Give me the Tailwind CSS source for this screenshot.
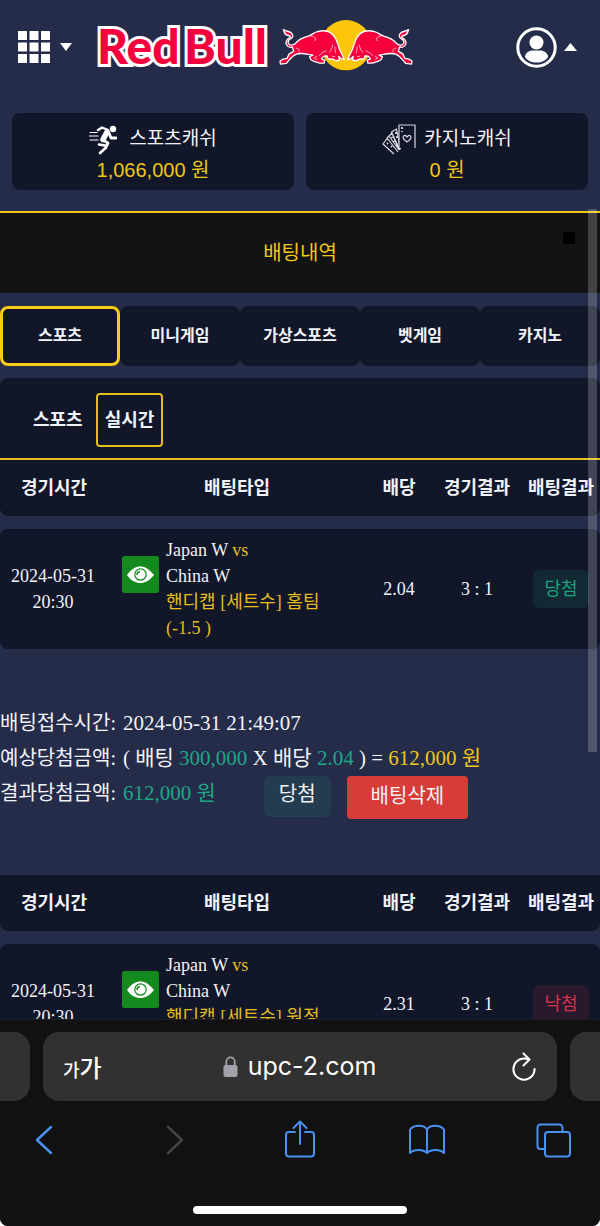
<!DOCTYPE html>
<html lang="ko">
<head>
    <meta charset="UTF-8">
    <meta name="viewport" content="width=device-width, initial-scale=1.0">
    <title>배팅내역</title>
    <script src="https://cdn.jsdelivr.net/npm/@tailwindcss/browser@4"></script>
</head>

<body class="bg-white">
    <div class="h-screen flex flex-col overflow-hidden rounded-b-lg bg-[#252c49] text-[#f1f3f8] font-['Liberation_Sans','Noto_Sans_CJK_KR',sans-serif]">

      <!-- top bar -->
      <header class="h-[94px] shrink-0 flex items-center pl-[18px] pr-[23px]">
        <button type="button" aria-label="메뉴" class="flex items-center gap-[10px]">
          <svg width="32" height="32" viewBox="0 0 32 32" fill="#fff">
            <path d="M0 0h9v9H0zM11.500 0h9v9h-9zM23 0h9v9h-9zM0 11.500h9v9H0zM11.500 11.500h9v9h-9zM23 11.500h9v9h-9zM0 23h9v9H0zM11.500 23h9v9h-9zM23 23h9v9h-9z"/>
          </svg>
          <svg width="12" height="8" viewBox="0 0 12 8" fill="#fff"><path d="M0 0h12L6 8z"/></svg>
        </button>
        <a href="#" class="ml-[21px] mb-1 flex items-center gap-[8px]">
          <svg width="178" height="64" viewBox="0 0 178 64" font-family="Lato, sans-serif" font-weight="900" font-size="48" fill="#f5003c" stroke="#fff" stroke-width="6" stroke-linejoin="miter" paint-order="stroke">
            <text x="4" y="51">Red</text>
            <text x="91" y="51">Bull</text>
          </svg>
          <svg width="134" height="53" viewBox="24 54 404 160">
            <circle cx="226" cy="133" r="76" fill="#fdc60b"/>
            <g id="bull" stroke="#fff" stroke-width="4" stroke-linejoin="round" stroke-linecap="round">
              <path fill="#f5003c" d="M37 86C44 92 54 90 61 96C68 103 66 109 60 113C52 117 50 121 52 127C56 135 66 134 74 127C84 116 96 110 112 106C122 103 128 95 140 92C154 88 168 88 180 96C193 105 198 118 202 132C206 146 210 154 215 163L221 177C213 176 208 172 204 167L206 178L196 180L186 175L172 174L168 165L158 167L152 175L162 178L160 187L146 187L130 182L120 177L116 168L126 163L112 161C96 157 86 157 76 160L66 166L56 176L46 188L28 190L27 181L36 175L48 173L54 160L68 151L64 138C58 141 50 138 46 131C43 122 48 115 56 110C60 106 56 103 49 103C40 101 40 95 37 86Z"/>
              <path d="M186 132c-1 10-6 16-10 22m16-16c0 8 3 12 3 18M122 106c10 0 14 6 10 14M76 142c8 2 10 6 8 12" fill="none" stroke-width="2"/>
              <path d="M166 150c-8 4-16 6-20 14M138 166l-8 6 8 4M184 166l8 2" fill="none" stroke-width="2"/>
            </g>
            <use href="#bull" transform="translate(452 0) scale(-1 1)"/>
          </svg>
        </a>
        <button type="button" aria-label="내 정보" class="ml-auto flex items-center gap-[7px]">
          <svg width="41" height="41" viewBox="0 0 41 41" fill="#fff">
            <circle cx="20.500" cy="20.500" r="18.700" fill="none" stroke="#fff" stroke-width="3"/>
            <circle cx="20.500" cy="15.500" r="7"/>
            <path d="M9 30c0-4 4-6.500 8-6.500h7c4 0 8 2.500 8 6.500-2 3.500-6 5.500-11.500 5.500S11 33.500 9 30z"/>
          </svg>
          <svg width="13" height="8" viewBox="0 0 13 8" fill="#fff"><path d="M0 8h13L6.500 0z"/></svg>
        </button>
      </header>

      <!-- balances -->
      <section class="shrink-0 grid grid-cols-2 gap-3 px-3 pt-[19px] pb-[21px]">
        <div class="h-[77px] pt-[11px] rounded-lg bg-[#111629] text-center">
          <div class="h-[31px] flex items-center justify-center gap-3 text-[19px]">
            <svg width="28" height="30" viewBox="0 0 28 30" fill="none" stroke="#fff" stroke-linecap="round" stroke-linejoin="round">
              <path d="M1 7.500h7M0 11h9M1 15h8" stroke-width="1.200"/>
              <circle cx="24" cy="4" r="3.200" fill="#fff" stroke="none"/>
              <path d="M9 5l4-2.500 6 2.500" stroke-width="2.400"/>
              <path d="M18 7l-4 7.500" stroke-width="5.500"/>
              <path d="M20 8l2 5h5M14 15l5 3-2.500 5" stroke-width="2.800"/>
              <path d="M10 19.500l6 1M16 23.500l-5 4.500" stroke-width="2.600"/>
            </svg>
            스포츠캐쉬
          </div>
          <div class="text-xl leading-[31px] text-[#f0c619]">1,066,000 원</div>
        </div>
        <div class="h-[77px] pt-[11px] rounded-lg bg-[#111629] text-center">
          <div class="h-[31px] flex items-center justify-center gap-2 text-[19px]">
            <svg width="34" height="31" viewBox="0 0 34 31" fill="#111629" stroke="#d5d8e0" stroke-width="1.200" stroke-linejoin="round">
              <path d="M12 30L1 20l6-8 10 14M16 28L5 14l5-5 8 17M17 26L9.500 8l5-3 4 20"/>
              <path d="M17 24V1h16v23"/>
              <path d="M25 18c-6-4-4-7-1.500-6.500L25 13l1.500-1.500C29 11 31 14 25 18z"/>
              <path d="M20 3v2m0 2v1M14 8v2m1 2v2M9.500 13l1 1m1 3l1 1M5 19l1 1m3 2l1 1" stroke-width="1.800"/>
            </svg>
            카지노캐쉬
          </div>
          <div class="text-xl leading-[31px] text-[#f0c619]">0 원</div>
        </div>
      </section>

      <main class="relative flex-1 min-h-0">
        <div class="h-full overflow-hidden">
          <div class="relative h-[82px] border-t-2 border-[#f0c619] bg-[#121315] flex items-center justify-center">
            <h1 class="text-xl text-[#f0c619]">배팅내역</h1>
            <button type="button" aria-label="닫기" class="absolute right-[25px] top-[19px] size-3 bg-black"></button>
          </div>

          <nav class="mt-[13px] grid grid-cols-5 h-[60px] text-base font-bold">
            <button type="button" class="rounded-lg bg-[#111629] border-3 border-[#f9cd16]">스포츠</button>
            <button type="button" class="rounded-lg bg-[#111629]">미니게임</button>
            <button type="button" class="rounded-lg bg-[#111629]">가상스포츠</button>
            <button type="button" class="rounded-lg bg-[#111629]">벳게임</button>
            <button type="button" class="rounded-lg bg-[#111629]">카지노</button>
          </nav>

          <div class="mt-3 h-[82px] pl-6 pt-[15px] flex items-start gap-1 rounded-t-lg bg-[#111629] border-b-2 border-[#e5bd1c] text-lg font-bold">
            <button type="button" class="h-[54px] px-[7px] rounded border-2 border-transparent">스포츠</button>
            <button type="button" class="h-[54px] px-[7px] rounded border-2 border-[#e5bd1c]">실시간</button>
          </div>

          <table class="w-full table-fixed border-separate border-spacing-0 text-lg leading-[26px] font-['Liberation_Serif','Noto_Sans_CJK_KR',serif]">
            <thead>
              <tr class="h-14">
                <th class="w-[18%] p-0 rounded-bl-lg bg-[#111629]">경기시간</th>
                <th class="w-[43%] p-0 bg-[#111629]">배팅타입</th>
                <th class="w-[11%] p-0 bg-[#111629]">배당</th>
                <th class="w-[15%] p-0 bg-[#111629]">경기결과</th>
                <th class="w-[13%] p-0 rounded-br-lg bg-[#111629]">배팅결과</th>
              </tr>
            </thead>
            <tbody class="before:block before:h-[13px] before:content-['']">
              <tr class="text-center">
                <td class="py-0 pl-0 pr-[2px] rounded-l-lg bg-[#111629]">2024-05-31<br>20:30</td>
                <td class="py-2 pl-[14px] pr-0 bg-[#111629]">
                  <div class="flex items-start gap-[7px] text-left">
                    <svg class="shrink-0 mt-[19px]" width="37" height="37" viewBox="0 0 37 37">
                      <rect width="37" height="37" rx="2.500" fill="#148a1e"/>
                      <path d="M5 19c4-6 9-8.500 13.500-8.500S27 13 32 19c-5 6-9 8-13.500 8S9 25 5 19z" fill="#fff"/>
                      <circle cx="18.500" cy="18.500" r="5.700" fill="none" stroke="#148a1e" stroke-width="1.200"/>
                      <path d="M18 15.500a3.500 3.500 0 0 0-3 3.500" fill="none" stroke="#148a1e" stroke-width="1.500"/>
                    </svg>
                    <div>Japan W <span class="text-[#e5bd1c]">vs</span><br>China W<br><span class="text-[#e5bd1c]">핸디캡 [세트수] 홈팀<br>(-1.5 )</span></div>
                  </div>
                </td>
                <td class="p-0 bg-[#111629]">2.04</td>
                <td class="p-0 bg-[#111629]">3 : 1</td>
                <td class="p-0 rounded-r-lg bg-[#111629]"><span class="inline-block px-[11px] py-[6px] rounded-md bg-[#122833] text-[#19a37e]">당첨</span></td>
              </tr>
            </tbody>
          </table>

          <dl class="mt-[57px] mb-14 text-[21px] leading-[35px] font-['Liberation_Serif','Noto_Sans_CJK_KR',serif]">
            <div class="flex gap-[7px]">
              <dt class="text-xl leading-[35px]">배팅접수시간:</dt>
              <dd>2024-05-31 21:49:07</dd>
            </div>
            <div class="flex gap-[7px]">
              <dt class="text-xl leading-[35px]">예상당첨금액:</dt>
              <dd>( 배팅 <span class="text-[#1fa685]">300,000</span> X 배당 <span class="text-[#1fa685]">2.04</span> ) = <span class="text-[#f0c619]">612,000 원</span></dd>
            </div>
            <div class="flex items-start">
              <dt class="mr-[7px] text-xl leading-[35px]">결과당첨금액:</dt>
              <dd class="text-[#1fa685]">612,000 원</dd>
              <dd class="ml-12 px-[15px] h-[41px] rounded-md bg-[#233c50] text-xl leading-[37px]">당첨</dd>
              <dd class="ml-4 flex"><button type="button" class="h-[43px] px-6 pb-1 rounded bg-[#d83c38] text-xl">배팅삭제</button></dd>
            </div>
          </dl>

          <table class="w-full table-fixed border-separate border-spacing-0 text-lg leading-[26px] font-['Liberation_Serif','Noto_Sans_CJK_KR',serif]">
            <thead>
              <tr class="h-14">
                <th class="w-[18%] p-0 rounded-bl-lg bg-[#111629]">경기시간</th>
                <th class="w-[43%] p-0 bg-[#111629]">배팅타입</th>
                <th class="w-[11%] p-0 bg-[#111629]">배당</th>
                <th class="w-[15%] p-0 bg-[#111629]">경기결과</th>
                <th class="w-[13%] p-0 rounded-br-lg bg-[#111629]">배팅결과</th>
              </tr>
            </thead>
            <tbody class="before:block before:h-[13px] before:content-['']">
              <tr class="text-center">
                <td class="py-0 pl-0 pr-[2px] rounded-l-lg bg-[#111629]">2024-05-31<br>20:30</td>
                <td class="py-2 pl-[14px] pr-0 bg-[#111629]">
                  <div class="flex items-start gap-[7px] text-left">
                    <svg class="shrink-0 mt-[19px]" width="37" height="37" viewBox="0 0 37 37">
                      <rect width="37" height="37" rx="2.500" fill="#148a1e"/>
                      <path d="M5 19c4-6 9-8.500 13.500-8.500S27 13 32 19c-5 6-9 8-13.500 8S9 25 5 19z" fill="#fff"/>
                      <circle cx="18.500" cy="18.500" r="5.700" fill="none" stroke="#148a1e" stroke-width="1.200"/>
                      <path d="M18 15.500a3.500 3.500 0 0 0-3 3.500" fill="none" stroke="#148a1e" stroke-width="1.500"/>
                    </svg>
                    <div>Japan W <span class="text-[#e5bd1c]">vs</span><br>China W<br><span class="text-[#e5bd1c]">핸디캡 [세트수] 원정<br>(1.5 )</span></div>
                  </div>
                </td>
                <td class="p-0 bg-[#111629]">2.31</td>
                <td class="p-0 bg-[#111629]">3 : 1</td>
                <td class="p-0 rounded-r-lg bg-[#111629]"><span class="inline-block px-[11px] py-[6px] rounded-md bg-[#2a182d] text-[#d5344a]">낙첨</span></td>
              </tr>
            </tbody>
          </table>
        </div>
        <!-- scroll thumb -->
        <div class="absolute right-[3px] -top-[2px] w-[9px] h-[543px] bg-white/20"></div>
      </main>

      <!-- browser bar -->
      <footer class="h-[207px] shrink-0 pt-3 flex flex-col bg-[#111111] border-t border-[#1d1d22]">
        <div class="h-[69px] flex gap-[13px]">
          <div class="w-[30px] rounded-r-2xl bg-[#313131]"></div>
          <div class="flex-1 grid grid-cols-[1fr_auto_1fr] items-center pl-5 pr-[21px] rounded-2xl bg-[#313131] text-white">
            <button type="button" aria-label="글자 크기" class="text-left font-medium font-['Noto_Sans_CJK_KR',sans-serif]"><span class="text-lg">가</span><span class="text-2xl">가</span></button>
            <div class="flex items-center gap-[10px]">
              <svg width="15" height="21" viewBox="0 0 15 21">
                <path d="M3.300 10V5.500a4.200 4.200 0 0 1 8.400 0V10" fill="none" stroke="#a3a2aa" stroke-width="1.800"/>
                <rect x="0.500" y="9" width="14" height="12" rx="2" fill="#a3a2aa"/>
              </svg>
              <span class="text-[25px] font-['Inter',sans-serif]">upc-2.com</span>
            </div>
            <button type="button" aria-label="새로고침" class="justify-self-end">
              <svg width="24" height="30" viewBox="0 0 24 30" fill="none" stroke="#fff" stroke-width="2" stroke-linecap="round" stroke-linejoin="round">
                <path d="M17 7.500c-2-.8-3.500-1-5-1A10.600 10.600 0 1 0 22.600 17M11.500 1.500l6 6-6 6"/>
              </svg>
            </button>
          </div>
          <div class="w-[30px] rounded-l-2xl bg-[#313131]"></div>
        </div>
        <div class="mt-[19px] flex justify-between pl-6 pr-[27px] text-[#4a90f0]">
          <button type="button" aria-label="뒤로">
            <svg width="40" height="40" viewBox="0 0 40 40" fill="none" stroke="currentColor" stroke-width="2.500" stroke-linecap="round" stroke-linejoin="round"><path d="M27 7L13 20l14 13"/></svg>
          </button>
          <button type="button" aria-label="앞으로" class="text-[#444446]">
            <svg width="40" height="40" viewBox="0 0 40 40" fill="none" stroke="currentColor" stroke-width="2.500" stroke-linecap="round" stroke-linejoin="round"><path d="M17 7l14 13-14 13"/></svg>
          </button>
          <button type="button" aria-label="공유">
            <svg width="40" height="40" viewBox="0 0 40 40" fill="none" stroke="currentColor" stroke-width="2" stroke-linecap="round" stroke-linejoin="round"><path d="M16 12h-6a3 3 0 0 0-3 3v18.500a3 3 0 0 0 3 3h22a3 3 0 0 0 3-3V15a3 3 0 0 0-3-3h-6M21 24V2M14.500 8L21 1.500 27.500 8"/></svg>
          </button>
          <button type="button" aria-label="책갈피">
            <svg width="40" height="40" viewBox="0 0 40 40" fill="none" stroke="currentColor" stroke-width="2" stroke-linecap="round" stroke-linejoin="round"><path d="M21 9.500c-3-5-13-5-17 0V33c4-4 13-4 17 0 4-4 13-4 17 0V9.500c-4-5-14-5-17 0V33"/></svg>
          </button>
          <button type="button" aria-label="탭">
            <svg width="40" height="40" viewBox="0 0 40 40" fill="none" stroke="currentColor" stroke-width="2" stroke-linejoin="round"><rect x="12" y="12" width="25" height="24.500" rx="3"/><path d="M12 29H7.500a3 3 0 0 1-3-3V7.500a3 3 0 0 1 3-3h19a3 3 0 0 1 3 3V12"/></svg>
          </button>
        </div>
        <div class="mt-auto mb-3 mx-auto w-[214px] h-2 rounded-full bg-white"></div>
      </footer>
    </div>
  </body>
</html>
